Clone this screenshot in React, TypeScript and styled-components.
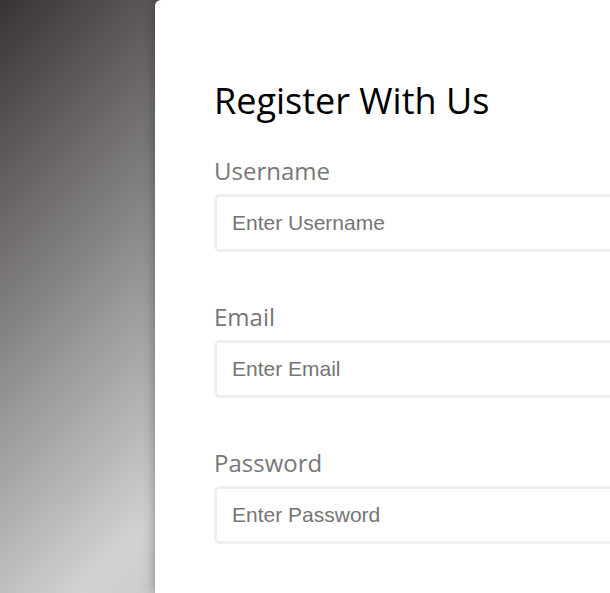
import styled, { createGlobalStyle } from "styled-components";

const GlobalStyle = createGlobalStyle`
  html, body {
    margin: 0;
    padding: 0;
  }
  body {
    font-family: "Open Sans", "Liberation Sans", sans-serif;
  }
  * {
    box-sizing: border-box;
  }
`;

const Page = styled.div`
  display: flex;
  height: 593px;
  overflow: hidden;
  background: linear-gradient(135deg, #393433 0%, #d2d2d2 56%, #a9a9a9 100%);
`;

const Aside = styled.div`
  flex: 0 0 155px;
`;

const Card = styled.div`
  flex: 0 0 560px;
  background: #fff;
  border-radius: 6px 6px 0 0;
  box-shadow: 0 0 14px rgba(0, 0, 0, 0.35);
  padding: 76px 0 0 59px;
`;

const Heading = styled.h1`
  margin: 0 0 29px;
  font-family: "Open Sans", sans-serif;
  font-size: 36px;
  font-weight: 400;
  color: #000;
`;

const Form = styled.form`
  display: flex;
  flex-direction: column;
  gap: 48px;
`;

const Field = styled.div`
  display: flex;
  flex-direction: column;
  gap: 7px;
`;

const Label = styled.label`
  font-family: "Open Sans", sans-serif;
  font-size: 24px;
  line-height: 33px;
  color: #777;
`;

const Input = styled.input`
  width: 500px;
  height: 58px;
  border: 3px solid #efefef;
  border-radius: 6px;
  padding: 0 15px;
  font-family: "Liberation Sans", Arial, sans-serif;
  font-size: 21px;
  color: #333;
  outline: none;
  &::placeholder {
    color: #757575;
  }
`;

const fields = [
  { id: "username", label: "Username", type: "text", placeholder: "Enter Username" },
  { id: "email", label: "Email", type: "email", placeholder: "Enter Email" },
  { id: "password", label: "Password", type: "password", placeholder: "Enter Password" },
];

const App = () => {
  return (
    <>
      <GlobalStyle />
      <Page>
        <Aside />
        <Card>
          <Heading>Register With Us</Heading>
          <Form onSubmit={(e) => e.preventDefault()}>
            {fields.map((f) => (
              <Field key={f.id}>
                <Label htmlFor={f.id}>{f.label}</Label>
                <Input id={f.id} type={f.type} placeholder={f.placeholder} />
              </Field>
            ))}
          </Form>
        </Card>
      </Page>
    </>
  );
};

export default App;
